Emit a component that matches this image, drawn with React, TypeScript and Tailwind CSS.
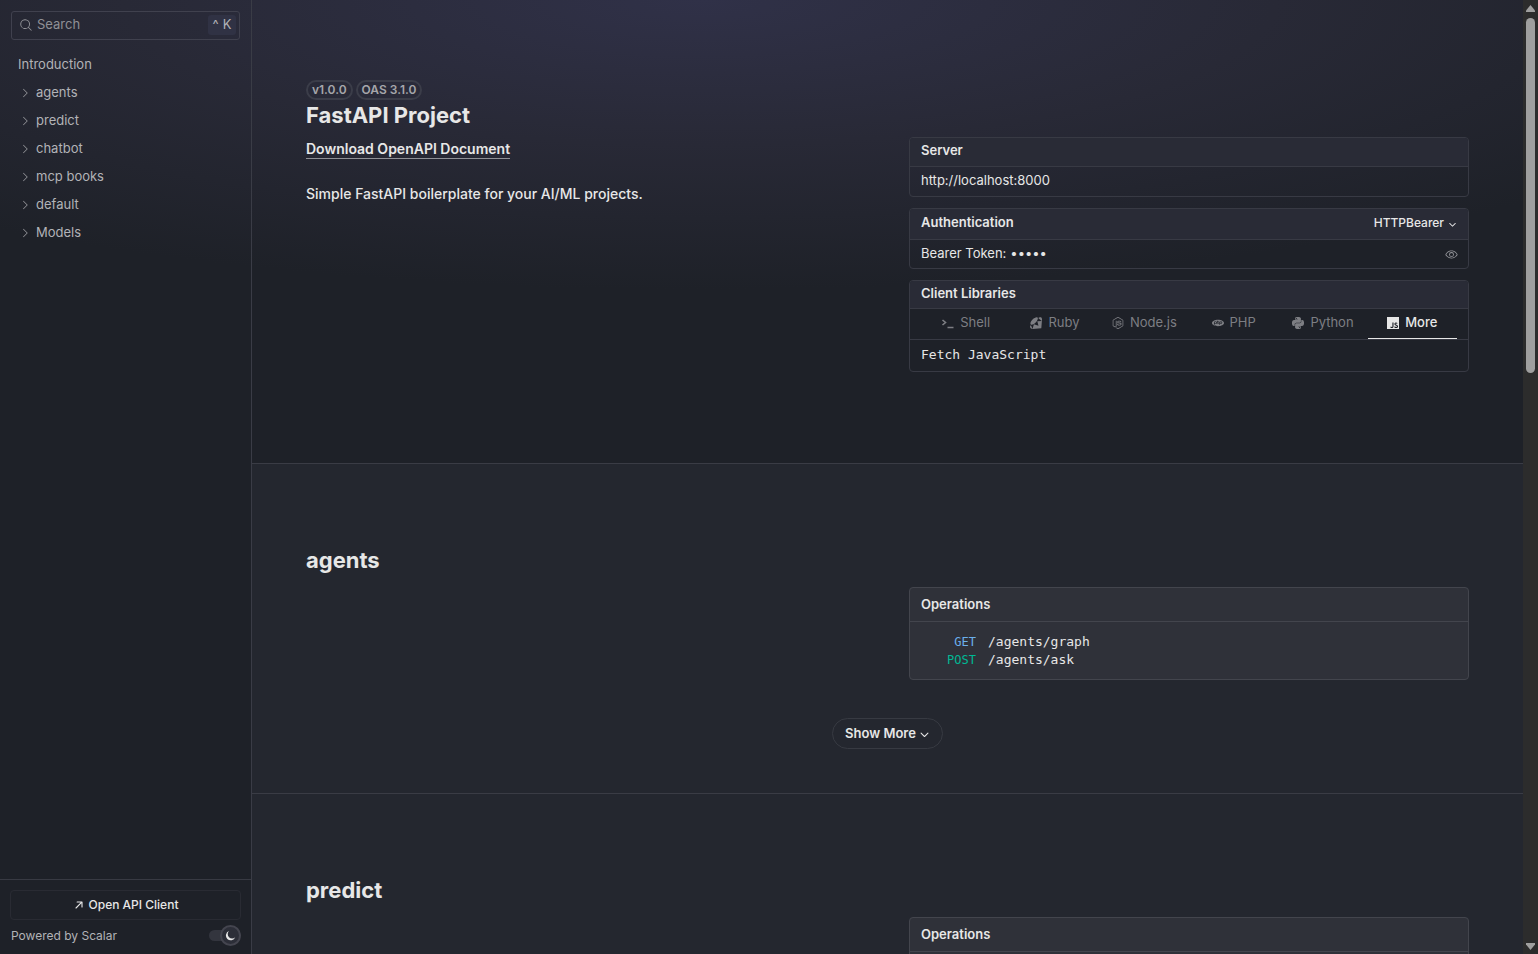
import React from 'react';
import { PiArrowUpRightBold, PiCaretDownBold, PiCaretRight, PiEye, PiMagnifyingGlass } from 'react-icons/pi';
import { SiJavascript, SiNodedotjs, SiPhp, SiPython, SiRuby } from 'react-icons/si';

const navItems = ['agents', 'predict', 'chatbot', 'mcp books', 'default', 'Models'];

const ShellIcon: React.FC = () => (
  <svg width="13" height="13" viewBox="0 0 13 13" fill="none" stroke="currentColor" strokeWidth="1.6">
    <path d="M1.5 3 4.5 5.5 1.5 8M6.5 10.5h6" />
  </svg>
);

const MoonIcon: React.FC = () => (
  <svg width="11" height="11" viewBox="0 0 11 11" fill="currentColor">
    <path d="M4 1A4.8 4.8 0 1 0 10.2 7.2 4 4 0 0 1 4 1Z" />
  </svg>
);

const clients = [
  { name: 'Shell', icon: <ShellIcon /> },
  { name: 'Ruby', icon: <SiRuby size={12} /> },
  { name: 'Node.js', icon: <SiNodedotjs size={12} /> },
  { name: 'PHP', icon: <SiPhp size={12} /> },
  { name: 'Python', icon: <SiPython size={12} /> },
  { name: 'More', icon: <SiJavascript size={12} />, active: true },
];

const sections = [
  {
    title: 'agents',
    operations: [
      { method: 'GET', path: '/agents/graph', color: 'text-[#6bafec]' },
      { method: 'POST', path: '/agents/ask', color: 'text-[#00b894]' },
    ],
  },
  { title: 'predict', operations: [] },
];

const Sidebar: React.FC = () => (
  <aside className="flex w-[252px] shrink-0 flex-col border-r border-[#3a3c46] text-[13px] text-[#b2b3b7]">
    <div className="px-[11px] pt-[11px]">
      <label className="flex h-[29px] items-center rounded-[3px] border border-[#40414e] pr-[3px] pb-[2px] pl-[7px]">
        <PiMagnifyingGlass size={14} className="shrink-0 text-[#96979c]" />
        <input
          type="text"
          aria-label="Search"
          placeholder="Search"
          className="ml-1 min-w-0 flex-1 bg-transparent outline-none placeholder:text-[#8f9096]"
        />
        <kbd className="flex h-5 w-7 items-center justify-center gap-1 rounded-[3px] bg-[#303244] font-['Inter',sans-serif] text-[13px]">
          <span>^</span>
          <span>K</span>
        </kbd>
      </label>
    </div>

    {/* Navigation */}
    <nav className="flex flex-1 flex-col px-[18px] pt-[11px]">
      <a href="#introduction" className="flex h-7 items-center">Introduction</a>
      {navItems.map((item) => (
        <a key={item} href={`#${item}`} className="flex h-7 items-center gap-[5px] pl-[1px]">
          <PiCaretRight size={12} className="text-[#96979c]" />
          {item}
        </a>
      ))}
    </nav>

    <div className="border-t border-[#383a43] px-[10px] pt-[10px] pb-2">
      <button className="flex h-[30px] w-full items-center justify-center gap-1 rounded-[4px] border border-[#292b33] text-[12px] font-medium text-[#e7e7e7]">
        <PiArrowUpRightBold size={12} />
        Open API Client
      </button>
      <div className="mt-[6px] flex h-5 items-center justify-between pb-[1px] pl-[1px]">
        <a href="#scalar" className="text-[12px]">Powered by Scalar</a>
        <button aria-label="Toggle dark mode" className="flex h-[11px] w-8 items-center justify-end rounded-full bg-[#33353e]">
          <span className="flex size-[21px] shrink-0 items-center justify-center rounded-full border-2 border-[#44454f] bg-[#2c2e38] text-[#e7e7e7]">
            <MoonIcon />
          </span>
        </button>
      </div>
    </div>
  </aside>
);

const Panel: React.FC<{ title: string; action?: React.ReactNode; head: string; children: React.ReactNode }> = ({
  title,
  action,
  head,
  children,
}) => (
  <div className="overflow-hidden rounded-[4px] border border-[#383a44] text-[13px] text-[#e7e7e7]">
    <div className={`flex items-center justify-between border-b border-[#383a44] bg-[#292b36] px-[11px] ${head}`}>
      <h3 className="font-semibold">{title}</h3>
      {action}
    </div>
    {children}
  </div>
);

const Introduction: React.FC = () => (
  <section className="border-b border-[#3a3c45] px-[54px] pt-20 pb-[91px]">
    <div className="flex gap-[3px] text-[12px] font-semibold text-[#a5a6aa]">
      <span className="flex h-5 items-center rounded-full border-2 border-[#3b3d49] px-1">v1.0.0</span>
      <span className="flex h-5 items-center rounded-full border-2 border-[#3b3d49] px-1">OAS 3.1.0</span>
    </div>
    <h1 className="text-[22px] leading-[30px] font-bold text-[#e7e7e7]">FastAPI Project</h1>
    <div className="mt-[7px] grid grid-cols-2 gap-[43px]">
      <div className="text-[14px] text-[#e7e7e7]">
        <a href="#download" className="inline-block border-b border-[#8f9096] pt-[2px] leading-[19px] font-semibold">
          Download OpenAPI Document
        </a>
        <p className="mt-[23px] leading-6 font-medium">Simple FastAPI boilerplate for your AI/ML projects.</p>
      </div>
      <div className="flex flex-col gap-[11px]">
        <Panel title="Server" head="h-[29px] pb-[2px]">
          <div className="flex h-[29px] items-center px-[11px] pb-[2px]">http://localhost:8000</div>
        </Panel>
        <Panel
          title="Authentication"
          head="h-[31px] pb-[2px]"
          action={
            <button className="flex items-center gap-1 text-[12px] font-medium">
              HTTPBearer
              <PiCaretDownBold size={9} className="mt-[2px]" />
            </button>
          }
        >
          <div className="flex h-[28px] items-center pr-[10px] pl-[11px]">
            <label htmlFor="token">Bearer Token:</label>
            <input
              id="token"
              type="password"
              defaultValue="token"
              className="ml-1 min-w-0 flex-1 bg-transparent outline-none"
            />
            <button aria-label="Show token" className="text-[#96979c]">
              <PiEye size={13} />
            </button>
          </div>
        </Panel>
        <Panel title="Client Libraries" head="h-[28px] pb-[2px]">
          <div className="grid h-[31px] grid-cols-6 border-b border-[#383a44] px-[11px] text-[#7d7e83]">
            {clients.map((client) => (
              <button
                key={client.name}
                className={`flex items-center justify-center gap-[6px] border-b pb-[1px] ${
                  client.active ? 'border-[#e7e7e7] font-medium text-[#e7e7e7]' : 'border-transparent'
                }`}
              >
                {client.icon}
                {client.name}
              </button>
            ))}
          </div>
          <div className="flex h-[31px] items-center px-[11px] pb-[2px] font-['DejaVu_Sans_Mono',monospace]">
            Fetch JavaScript
          </div>
        </Panel>
      </div>
    </div>
  </section>
);

const TagSection: React.FC<(typeof sections)[number]> = ({ title, operations }) => (
  <section id={title} className="border-b border-[#3a3c45] bg-[#24272f] px-[54px] pt-[81px] pb-11">
    <h2 className="text-[22px] leading-[30px] font-bold text-[#e7e7e7]">{title}</h2>
    <div className="mt-3 grid grid-cols-2 gap-[43px]">
      <div />
      <div className="overflow-hidden rounded-[4px] border border-[#43454d] bg-[#2f3139] text-[13px] text-[#e7e7e7]">
        <h3 className="flex h-[34px] items-center border-b border-[#43454d] px-[11px] font-semibold">Operations</h3>
        <ul className="px-[11px] pt-[11px] pb-[10px] font-['DejaVu_Sans_Mono',monospace]">
          {operations.map((op) => (
            <li key={op.path}>
              <a href={`#${op.path}`} className="flex h-[18px] items-center gap-3">
                <span className={`w-[55px] text-right text-[12px] ${op.color}`}>{op.method}</span>
                <span>{op.path}</span>
              </a>
            </li>
          ))}
        </ul>
      </div>
    </div>
    {operations.length > 0 && (
      <button className="mx-auto mt-[38px] flex h-[31px] items-center gap-[3px] rounded-full border border-[#373a42] px-3 text-[13px] font-semibold text-[#e7e7e7]">
        Show More
        <PiCaretDownBold size={11} className="mt-[2px]" />
      </button>
    )}
  </section>
);

const Scrollbar: React.FC = () => (
  <div className="flex w-[15px] shrink-0 flex-col items-center bg-[#2c2c2c] py-1 text-[#9f9f9f]">
    <svg width="9" height="8" viewBox="0 0 9 8" fill="currentColor">
      <path d="M4.5 1 9 6.5V8H0V6.5Z" />
    </svg>
    <div className="mt-[6px] flex w-[9px] flex-1 flex-col">
      <div className="h-[38.4%] rounded-full bg-[#9f9f9f]" />
    </div>
    <svg width="9" height="8" viewBox="0 0 9 8" fill="currentColor">
      <path d="M0 1H9V2.5L4.5 8 0 2.5Z" />
    </svg>
  </div>
);

export default function App() {
  return (
    <div className="flex h-screen overflow-hidden bg-[#1e2128] font-['Inter',sans-serif]">
      <div className="flex min-w-0 flex-1 bg-[radial-gradient(ellipse_1150px_290px_at_46%_0%,#303148_0%,#282936_50%,#1e2128_100%)] bg-no-repeat">
        <Sidebar />
        <main className="min-w-0 flex-1 overflow-hidden">
          <Introduction />
          {sections.map((section) => (
            <TagSection key={section.title} {...section} />
          ))}
        </main>
      </div>
      <Scrollbar />
    </div>
  );
}
